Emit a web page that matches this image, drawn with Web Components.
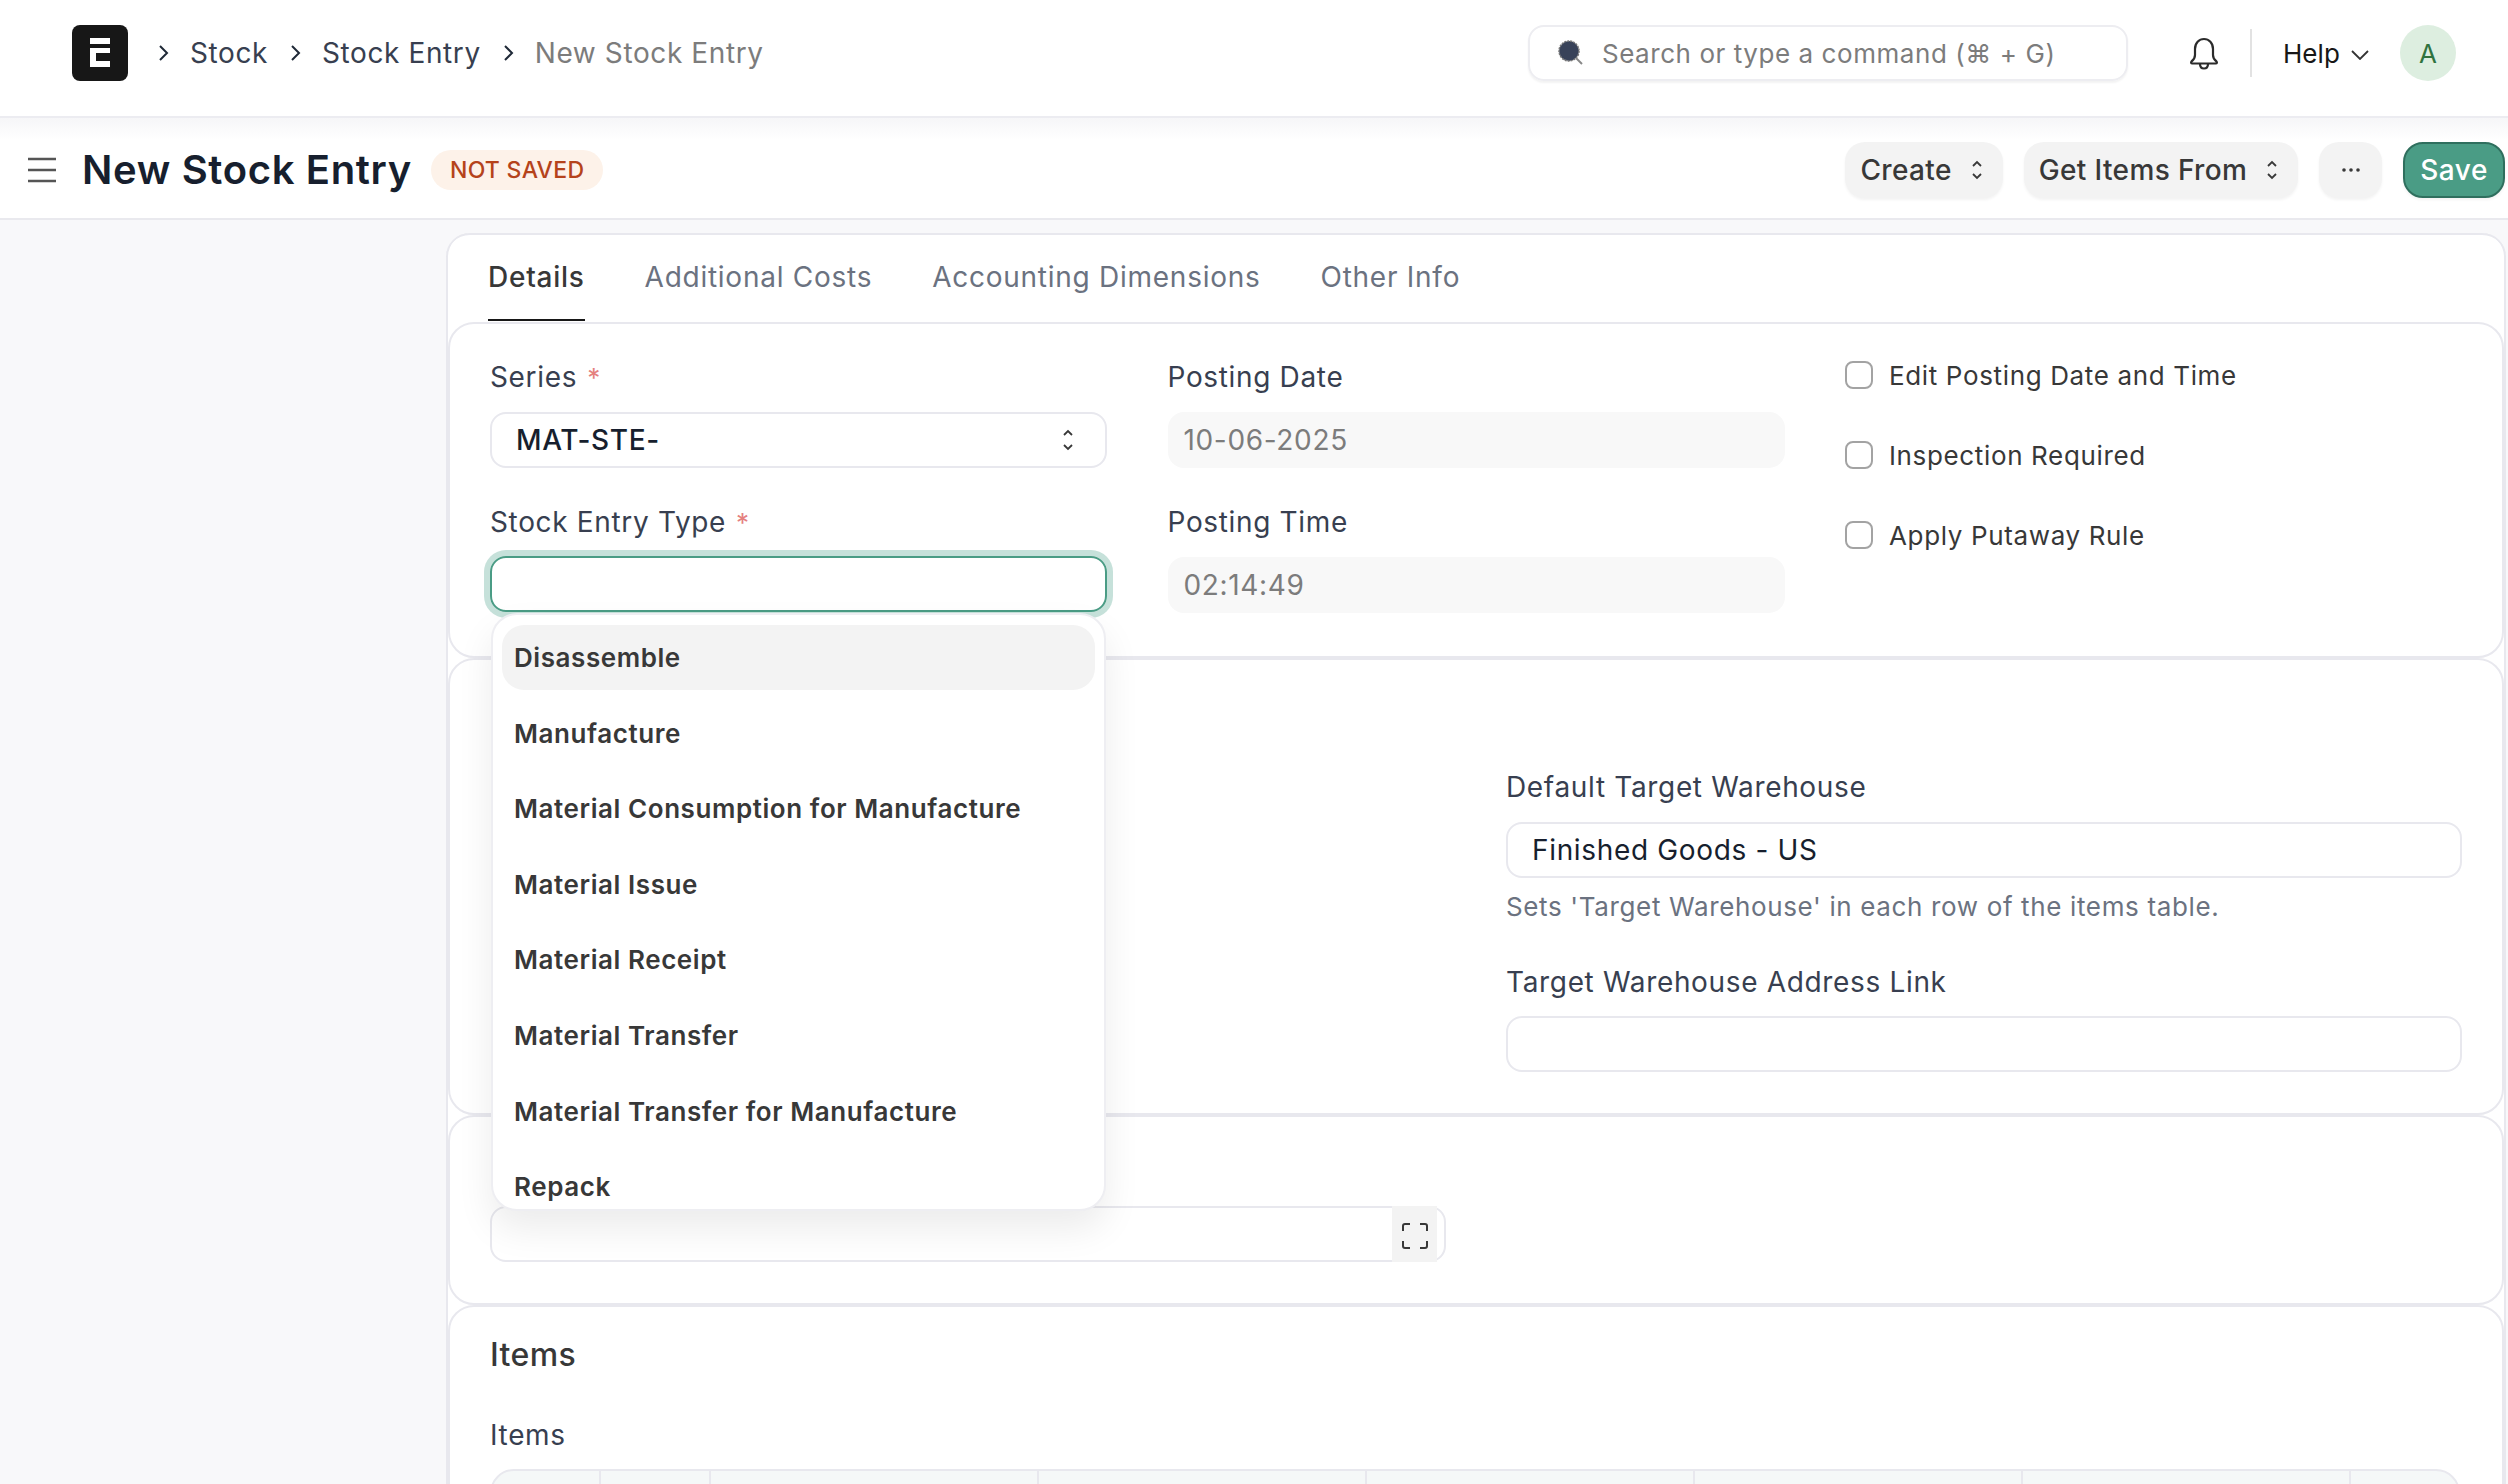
<!DOCTYPE html>
<html lang="en">
<head>
<meta charset="utf-8">
<title>New Stock Entry</title>
<style>
    html, body {
        margin: 0;
        height: 1484px;
        overflow: hidden;
        background: #f8f8fa;
        font-family: Inter, "Liberation Sans", sans-serif;
    }
    .page {
        display: grid;
        grid-template-columns: 446px 2060px;
        padding-top: 13px;
    }
</style>
</head>
<body>
<app-navbar></app-navbar>
<page-head></page-head>
<div class="page">
    <div></div>
    <form-card>
        <form-tabs></form-tabs>
        <form-section top="39" height="336">
            <div style="display:grid;grid-template-columns:617px 617px 617px;column-gap:60.5px;position:relative">
                <div>
                    <form-field label="Series" required value="MAT-STE-" kind="select" gap="40"></form-field>
                    <form-field label="Stock Entry Type" required kind="focus" label-gap="20">
                        <link-dropdown></link-dropdown>
                    </form-field>
                </div>
                <div>
                    <form-field label="Posting Date" value="10-06-2025" kind="readonly" gap="40"></form-field>
                    <form-field label="Posting Time" value="02:14:49" kind="readonly"></form-field>
                </div>
                <div style="margin-top:-2px">
                    <check-box label="Edit Posting Date and Time"></check-box>
                    <check-box label="Inspection Required"></check-box>
                    <check-box label="Apply Putaway Rule"></check-box>
                </div>
            </div>
        </form-section>
        <form-section top="113" height="457">
            <div style="margin-left:1016px;width:956px">
                <form-field label="Default Target Warehouse" value="Finished Goods - US" description="Sets 'Target Warehouse' in each row of the items table." gap="45"></form-field>
                <form-field label="Target Warehouse Address Link" label-gap="20"></form-field>
            </div>
        </form-section>
        <form-section top="89" height="190">
            <barcode-input></barcode-input>
        </form-section>
        <form-section top="30" height="240">
            <items-table></items-table>
        </form-section>
    </form-card>
</div>

<script>
// top bar with logo, breadcrumbs, search and user menu
class AppNavbar extends HTMLElement {
    constructor () {
        super();
        this.attachShadow({ mode: 'open' }).innerHTML = `
            <style>
                :host {
                    display: flex;
                    align-items: center;
                    box-sizing: border-box;
                    height: 118px;
                    padding: 0 52px 10px 72px;
                    background: #fff;
                    border-bottom: 2px solid #ececf1;
                    position: relative;
                    z-index: 2;
                    font-size: 28px;
                    letter-spacing: .6px;
                }
                .logo { width: 56px; height: 56px; flex: none; display: block; }
                .crumbs { display: flex; align-items: center; margin-left: 28px; color: #383f50; }
                .crumbs svg { width: 16px; height: 20px; margin-right: 18px; }
                .crumbs span { margin-right: 20px; }
                .crumbs .last { color: #7c7c7c; margin: 0; }
                .search {
                    display: flex;
                    align-items: center;
                    box-sizing: border-box;
                    width: 600px;
                    height: 56px;
                    margin-left: auto;
                    padding-left: 28px;
                    border: 2px solid #ededf1;
                    border-radius: 16px;
                    box-shadow: 0 2px 2px rgba(0,0,0,.05);
                    color: #7c7c7c;
                    font-size: 26px;
                    letter-spacing: .56px;
                }
                .search svg { width: 26px; height: 26px; margin-right: 18px; flex: none; }
                .bell { width: 32px; height: 34px; margin-left: 60px; flex: none; }
                .sep { width: 2px; height: 48px; background: #e2e2e2; margin: 0 31px 0 30px; }
                .help { color: #171717; font-size: 26px; letter-spacing: .1px; }
                .chev { width: 18px; height: 10px; margin: 4px 31px 0 11px; flex: none; }
                .avatar {
                    width: 56px;
                    height: 56px;
                    border-radius: 50%;
                    background: #ddeee0;
                    color: #30733f;
                    display: flex;
                    align-items: center;
                    justify-content: center;
                    flex: none;
                    font-size: 26px;
                    letter-spacing: 0;
                }
            </style>
            <svg class="logo" viewBox="0 0 56 56">
                <rect width="56" height="56" rx="8" fill="#171717"/>
                <path d="M18 13h20v6H18zM18 23h20v5H24v8h14v6H18z" fill="#fff"/>
            </svg>
            <div class="crumbs">
                <svg viewBox="0 0 16 20"><path d="M4 3l7 7-7 7" fill="none" stroke="#1f2937" stroke-width="2"/></svg>
                <span>Stock</span>
                <svg viewBox="0 0 16 20"><path d="M4 3l7 7-7 7" fill="none" stroke="#1f2937" stroke-width="2"/></svg>
                <span>Stock Entry</span>
                <svg viewBox="0 0 16 20"><path d="M4 3l7 7-7 7" fill="none" stroke="#1f2937" stroke-width="2"/></svg>
                <span class="last">New Stock Entry</span>
            </div>
            <div class="search">
                <svg viewBox="0 0 26 26">
                    <circle cx="11" cy="11" r="10" fill="#384259" stroke="#777" stroke-width="1.5" stroke-dasharray="2 1"/>
                    <path d="M18 18l6 6" stroke="#888" stroke-width="2" fill="none"/>
                </svg>
                <span>Search or type a command (⌘ + G)</span>
            </div>
            <svg class="bell" viewBox="0 0 32 34" fill="none" stroke="#2b2b2b" stroke-width="2.2" stroke-linejoin="round">
                <path d="M16 3c-5 0-9 4-9 10v6c0 3-1.500 5-3.500 6.500-.8.8-.4 2 .7 2h23.600c1.100 0 1.500-1.200.7-2C26.500 24 25 22 25 19v-6c0-6-4-10-9-10z"/>
                <path d="M12 28c0 3 1.800 4.500 4 4.500s4-1.500 4-4.500"/>
            </svg>
            <div class="sep"></div>
            <span class="help">Help</span>
            <svg class="chev" viewBox="0 0 18 10"><path d="M1 1l8 8 8-8" fill="none" stroke="#333" stroke-width="1.800"/></svg>
            <div class="avatar">A</div>`;
    }
}

class PageHead extends HTMLElement {
    constructor () {
        super();
        this.attachShadow({ mode: 'open' }).innerHTML = `
            <style>
                :host {
                    display: flex;
                    align-items: center;
                    box-sizing: border-box;
                    height: 102px;
                    padding: 3px 3px 0 28px;
                    background: linear-gradient(#f6f6f8, #fff 22px);
                    border-bottom: 2px solid #e9e9ee;
                    font-size: 28px;
                    letter-spacing: .36px;
                }
                .menu { width: 28px; height: 26px; flex: none; margin-right: 26px; }
                h1 { margin: 0; font-size: 40px; font-weight: 600; color: #171f2e; letter-spacing: .65px; }
                .badge {
                    margin-left: 19px;
                    height: 40px;
                    padding: 0 19px;
                    border-radius: 20px;
                    background: #fdf2e9;
                    color: #b5431b;
                    font-size: 23px;
                    font-weight: 500;
                    line-height: 40px;
                    letter-spacing: .3px;
                }
                .actions { margin-left: auto; display: flex; gap: 21px; align-items: center; }
                .btn {
                    display: flex;
                    align-items: center;
                    box-sizing: border-box;
                    height: 56px;
                    padding: 0 20px 0 15px;
                    border-radius: 20px;
                    background: #f3f3f3;
                    box-shadow: 0 2px 3px rgba(0,0,0,.05);
                    color: #383838;
                    font-weight: 500;
                }
                .btn svg { width: 12px; height: 22px; margin-left: 19px; }
                .more { width: 63px; justify-content: center; padding: 0; }
                .more svg { width: 20px; height: 6px; margin: 0; }
                .save {
                    background: #4a9c85;
                    border: 2px solid #2f6f5e;
                    color: #fff;
                    padding: 0 15px;
                    letter-spacing: .56px;
                }
            </style>
            <svg class="menu" viewBox="0 0 28 26" fill="none" stroke="#555" stroke-width="2.500">
                <path d="M0 2h28M0 13h28M0 24h28"/>
            </svg>
            <h1>New Stock Entry</h1>
            <span class="badge">NOT SAVED</span>
            <div class="actions">
                <div class="btn">Create<svg viewBox="0 0 12 22"><path d="M2 7l4-4 4 4M2 15l4 4 4-4" fill="none" stroke="#383838" stroke-width="1.800"/></svg></div>
                <div class="btn">Get Items From<svg viewBox="0 0 12 22"><path d="M2 7l4-4 4 4M2 15l4 4 4-4" fill="none" stroke="#383838" stroke-width="1.800"/></svg></div>
                <div class="btn more"><svg viewBox="0 0 20 6"><circle cx="3" cy="3" r="1.800" fill="#383838"/><circle cx="10" cy="3" r="1.800" fill="#383838"/><circle cx="17" cy="3" r="1.800" fill="#383838"/></svg></div>
                <div class="btn save">Save</div>
            </div>`;
    }
}

class FormCard extends HTMLElement {
    constructor () {
        super();
        this.attachShadow({ mode: 'open' }).innerHTML = `
            <style>
                :host {
                    display: block;
                    box-sizing: border-box;
                    height: 1300px;
                    padding: 0 2px;
                    background: #fff;
                    border-radius: 24px 24px 0 0;
                    box-shadow: inset 0 2px 0 #e8e8ee, inset 2px 0 0 #e8e8ee, inset -2px 0 0 #e8e8ee;
                }
            </style>
            <slot></slot>`;
    }
}

class FormTabs extends HTMLElement {
    constructor () {
        super();
        this.attachShadow({ mode: 'open' }).innerHTML = `
            <style>
                :host {
                    display: flex;
                    box-sizing: border-box;
                    height: 89px;
                    padding-left: 40px;
                    gap: 60px;
                    font-size: 28px;
                    letter-spacing: .74px;
                    color: #6b7280;
                }
                div {
                    box-sizing: border-box;
                    height: 88px;
                    padding-top: 27px;
                    line-height: 34px;
                }
                .on {
                    color: #383838;
                    font-weight: 500;
                    border-bottom: 2px solid #171717;
                }
            </style>
            <div class="on">Details</div>
            <div>Additional Costs</div>
            <div>Accounting Dimensions</div>
            <div>Other Info</div>`;
    }
}

class FormSection extends HTMLElement {
    constructor () {
        super();
        const top = this.getAttribute('top');
        const height = this.getAttribute('height');
        this.attachShadow({ mode: 'open' }).innerHTML = `
            <style>
                :host {
                    display: block;
                    box-sizing: border-box;
                    height: ${height}px;
                    padding: ${top}px 40px 0;
                    background: #fff;
                    border: 2px solid #e8e8ee;
                    border-radius: 26px;
                }
            </style>
            <slot></slot>`;
    }
}

class FormField extends HTMLElement {
    constructor () {
        super();
        const label = this.getAttribute('label');
        const kind = this.getAttribute('kind') || 'plain';
        const value = this.getAttribute('value') || '';
        const description = this.getAttribute('description');
        const labelGap = this.getAttribute('label-gap') || 21;
        const star = this.hasAttribute('required') ? '<i>*</i>' : '';
        const arrows = kind === 'select'
            ? '<svg viewBox="0 0 12 24"><path d="M2 7l4-4 4 4M2 17l4 4 4-4" fill="none" stroke="#383838" stroke-width="1.800"/></svg>'
            : '';
        this.attachShadow({ mode: 'open' }).innerHTML = `
            <style>
                :host {
                    display: block;
                    position: relative;
                    margin-bottom: ${this.getAttribute('gap') || 39}px;
                    font-size: 28px;
                    letter-spacing: .66px;
                }
                label { display: block; height: 28px; line-height: 28px; margin-bottom: ${labelGap}px; color: #383f50; }
                i { color: #e5817f; font-style: normal; margin-left: 10px; font-size: 26px; }
                .ctl {
                    display: flex;
                    align-items: center;
                    justify-content: space-between;
                    box-sizing: border-box;
                    height: 56px;
                    padding: 0 24px;
                    border: 2px solid #e8e8ee;
                    border-radius: 16px;
                    color: #171f2e;
                }
                .readonly { background: #f8f8f8; border-color: #f8f8f8; color: #7c7c7c; padding: 0 14px; }
                .select { font-weight: 500; }
                .focus { border-color: #4a9c85; box-shadow: 0 0 0 6px #c6e1da; }
                svg { width: 12px; height: 24px; margin-right: 7px; }
                p { margin: 13px 0 0; font-size: 26px; line-height: 32px; color: #6b7280; letter-spacing: .64px; }
            </style>
            <label>${label}${star}</label>
            <div class="ctl ${kind}"><span>${value}</span>${arrows}</div>
            ${description ? `<p>${description}</p>` : ''}
            <slot></slot>`;
    }
}

// open suggestions of the link field, lies over the sections below
class LinkDropdown extends HTMLElement {
    constructor () {
        super();
        const items = ['Disassemble', 'Manufacture', 'Material Consumption for Manufacture', 'Material Issue',
            'Material Receipt', 'Material Transfer', 'Material Transfer for Manufacture', 'Repack'];
        this.attachShadow({ mode: 'open' }).innerHTML = `
            <style>
                :host {
                    display: block;
                    position: absolute;
                    left: 1px;
                    top: 105px;
                    width: 615px;
                    height: 598px;
                    box-sizing: border-box;
                    padding: 10px 9px;
                    overflow: hidden;
                    background: #fff;
                    border: 2px solid #eeeef2;
                    border-radius: 26px;
                    box-shadow: 0 18px 36px rgba(0,0,0,.08);
                    z-index: 5;
                }
                div {
                    box-sizing: border-box;
                    height: 75.600px;
                    padding: 0 12px;
                    line-height: 66px;
                    border-radius: 22px;
                    font-size: 26px;
                    font-weight: 600;
                    letter-spacing: .57px;
                    color: #383838;
                    white-space: nowrap;
                }
                div:first-of-type { height: 65px; margin-bottom: 10.600px; line-height: 65px; background: #f3f3f3; }
            </style>
            ${items.map(item => `<div>${item}</div>`).join('')}`;
    }
}

class CheckBox extends HTMLElement {
    constructor () {
        super();
        this.attachShadow({ mode: 'open' }).innerHTML = `
            <style>
                :host {
                    display: flex;
                    align-items: center;
                    height: 28px;
                    margin-bottom: 52px;
                    font-size: 26px;
                    letter-spacing: .64px;
                    color: #383838;
                }
                b {
                    box-sizing: border-box;
                    width: 28px;
                    height: 28px;
                    margin-right: 16px;
                    border: 2px solid #a3a3a3;
                    border-radius: 8px;
                }
            </style>
            <b></b><span>${this.getAttribute('label')}</span>`;
    }
}

class BarcodeInput extends HTMLElement {
    constructor () {
        super();
        this.attachShadow({ mode: 'open' }).innerHTML = `
            <style>
                :host {
                    display: flex;
                    justify-content: flex-end;
                    box-sizing: border-box;
                    width: 956px;
                    height: 56px;
                    padding-right: 7px;
                    border: 2px solid #e8e8ee;
                    border-radius: 16px;
                }
                div {
                    display: flex;
                    align-items: center;
                    justify-content: center;
                    width: 45px;
                    margin: -2px 0;
                    background: #f3f3f3;
                }
                svg { width: 26px; height: 26px; margin-top: 4px; }
            </style>
            <div><svg viewBox="0 0 26 26"><path d="M1 8V3q0-2 2-2h5M18 1h5q2 0 2 2v5M1 18v5q0 2 2 2h5M25 18v5q0 2-2 2h-5" fill="none" stroke="#383838" stroke-width="2"/></svg></div>`;
    }
}

class ItemsTable extends HTMLElement {
    constructor () {
        super();
        const widths = [109, 110, 328, 328, 328, 328, 328, 110];
        this.attachShadow({ mode: 'open' }).innerHTML = `
            <style>
                :host { display: block; }
                h3 { margin: 0; font-size: 32px; line-height: 36px; font-weight: 500; color: #383838; letter-spacing: .4px; }
                label { display: block; margin-top: 45px; font-size: 28px; line-height: 34px; color: #383f50; letter-spacing: .66px; }
                .tbl {
                    display: flex;
                    box-sizing: border-box;
                    width: 1970px;
                    height: 60px;
                    margin-top: 17px;
                    overflow: hidden;
                    background: #f5f8f8;
                    border: 2px solid #e8e8ee;
                    border-radius: 24px;
                }
                .tbl div { flex: none; box-sizing: border-box; border-right: 2px solid #e8e8ee; }
                .tbl div:last-child { border-right: 0; flex: 1; }
            </style>
            <h3>Items</h3>
            <label>Items</label>
            <div class="tbl">${widths.map(w => `<div style="width:${w}px"></div>`).join('')}</div>`;
    }
}

customElements.define('app-navbar', AppNavbar);
customElements.define('page-head', PageHead);
customElements.define('form-card', FormCard);
customElements.define('form-tabs', FormTabs);
customElements.define('form-section', FormSection);
customElements.define('form-field', FormField);
customElements.define('link-dropdown', LinkDropdown);
customElements.define('check-box', CheckBox);
customElements.define('barcode-input', BarcodeInput);
customElements.define('items-table', ItemsTable);
</script>
</body>
</html>
